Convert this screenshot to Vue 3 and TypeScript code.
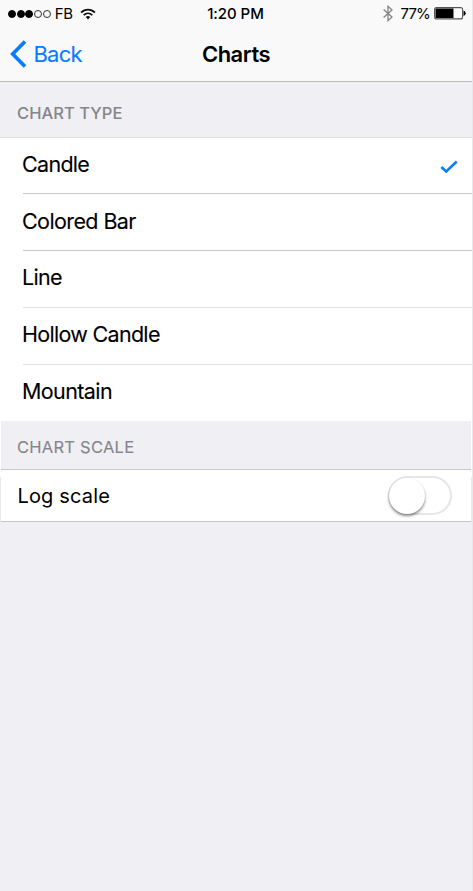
<script setup lang="ts">
import { ref } from 'vue'

interface ChartOption {
  id: string
  label: string
}

const options: ChartOption[] = [
  { id: 'candle', label: 'Candle' },
  { id: 'colored', label: 'Colored Bar' },
  { id: 'line', label: 'Line' },
  { id: 'hollow', label: 'Hollow Candle' },
  { id: 'mountain', label: 'Mountain' },
]
const selected = ref('candle')
const logScale = ref(false)
const signal = [true, true, true, false, false]
</script>

<template>
  <div class="screen">
    <header class="top">
      <div class="status">
        <div class="carrier">
          <span class="dots"><i v-for="(on, n) in signal" :key="n" class="dot" :class="{ on }"></i></span>
          <span class="network">FB</span>
          <svg class="wifi" width="16" height="12" viewBox="0 0 16 12" fill="none" stroke="#111" stroke-width="1.8">
            <path d="M1.1 4.5C5 .6 11 .6 14.9 4.5" />
            <path d="M3.7 7.1C6.2 4.7 9.8 4.7 12.3 7.1" />
            <path d="M5.7 9.1Q8 7 10.3 9.1L8 11.5Z" fill="#111" stroke="none" />
          </svg>
        </div>
        <span class="time">1:20 PM</span>
        <div class="power">
          <svg class="bluetooth" width="10" height="17" viewBox="0 0 10 17" fill="none" stroke="#858585" stroke-width="1.3">
            <path d="M.6 4.6 9 12 5 15.7V1.3L9 5 .6 12.4" />
          </svg>
          <span class="percent">77%</span>
          <svg class="battery" width="32" height="13" viewBox="0 0 32 13">
            <rect x=".6" y=".6" width="28" height="11.3" rx="2" fill="#fff" stroke="#555" stroke-width="1.1" />
            <path d="M1.5 1.5H19.5V11H1.5Z" fill="#000" />
            <path d="M29.5 3.5Q31.7 4.3 31.7 6.2T29.5 9Z" fill="#000" />
          </svg>
        </div>
      </div>
      <nav class="nav">
        <button class="back">
          <svg width="17" height="28" viewBox="0 0 17 28" fill="none" stroke="#087cff" stroke-width="3.7">
            <path d="M15 1.5 2.7 14 15 26.5" />
          </svg>
          <span>Back</span>
        </button>
        <h1>Charts</h1>
      </nav>
    </header>

    <h2 class="heading type">CHART TYPE</h2>
    <ul class="list">
      <li v-for="o in options" :key="o.id" :class="o.id" @click="selected = o.id">
        <span class="label">{{ o.label }}</span>
        <svg v-if="selected === o.id" class="check" width="18" height="14" viewBox="0 0 18 14" fill="none" stroke="#087cff" stroke-width="2.5">
          <path d="M1.3 7 6.2 11.5 16.7 1.5" />
        </svg>
      </li>
    </ul>
    <section class="scale-section">
      <h2 class="heading scale">CHART SCALE</h2>
      <div class="row">
        <span class="row-label">Log scale</span>
        <button class="switch" :class="{ active: logScale }" role="switch" :aria-checked="logScale" @click="logScale = !logScale">
          <i class="knob"></i>
        </button>
      </div>
    </section>
  </div>
</template>

<style>
body { margin: 0; }
</style>

<style scoped>
* { box-sizing: border-box; }
.screen {
  width: 473px;
  height: 891px;
  background: #efeff4;
  border-right: 1px solid #e8e8ec;
  font-family: Inter, Roboto, sans-serif;
  color: #000;
  overflow: hidden;
}
button { border: 0; background: none; padding: 0; font: inherit; }
.top { height: 82px; background: #f9f9f9; border-bottom: 1px solid #bdbdc0; }
.status { height: 27px; display: grid; grid-template-columns: 1fr auto 1fr; align-items: center; font-size: 15px; line-height: 27px; }
.carrier { display: flex; align-items: center; padding-left: 8px; }
.dots { display: flex; gap: .7px; }
.dot { width: 8px; height: 8px; border: 1px solid #333; border-radius: 50%; }
.dot.on { background: #000; border-color: #000; }
.network { margin-left: 4px; letter-spacing: -.3px; }
.wifi { margin-left: 7px; }
.time { font-weight: 500; letter-spacing: -.05px; margin-right: 1px; }
.power { display: flex; align-items: center; justify-content: flex-end; padding-right: 6px; }
.percent { margin: 0 4px 0 8px; letter-spacing: -.85px; }
.bluetooth { margin-right: 0; }
.nav { height: 54px; display: grid; grid-template-columns: 1fr auto 1fr; align-items: center; }
.back { display: flex; align-items: center; gap: 7px; padding-left: 10px; color: #087cff; font-size: 22px; letter-spacing: -.8px; line-height: 54px; }
.back span { margin-left: -.5px; -webkit-text-stroke: .1px; }
h1 { margin: 0; font-size: 22px; font-weight: 600; letter-spacing: -.5px; line-height: 54px; }
.heading { margin: 0; padding-left: 17px; color: #85858b; font-size: 16.5px; font-weight: 500; }
.type { height: 56px; line-height: 63px; border-bottom: 1px solid #dedee1; letter-spacing: .05px; }
.list { list-style: none; margin: 0; padding: 0 0 0 23px; background: #fff; }
.list li { height: 57px; display: flex; justify-content: space-between; padding-right: 14px; border-bottom: 1px solid #c8c8cc; font-size: 21.5px; line-height: 53px; letter-spacing: -.7px; }
.list .candle { height: 56px; }
.list .colored { line-height: 54px; letter-spacing: -.6px; }
.list .line, .list .hollow { border-color: #e1e1e4; }
.list .mountain { height: 56px; border: 0; letter-spacing: -.6px; }
.label { margin-left: -1px; -webkit-text-stroke: .1px; }
.check { margin-top: 22px; }
.scale-section { padding: 0 1px; background: linear-gradient(#fff 0 56px, #e8e8ec 56px); }
.scale { height: 49px; padding-left: 16px; line-height: 52px; font-weight: 400; letter-spacing: .25px; background: #efeff4; border-bottom: 1px solid #c8c8ce; -webkit-text-stroke: .1px; }
.row { height: 52px; display: flex; align-items: center; justify-content: space-between; padding: 0 19px 0 16.5px; background: #fff; border-bottom: 1px solid #c4c4c9; }
.row-label { font-size: 20px; letter-spacing: .15px; }
.switch { width: 64px; height: 39px; border: 2.5px solid #e6e6e6; border-radius: 20px; }
.knob { display: block; width: 36px; height: 36px; margin: -.5px 0 0 -1px; border-radius: 50%; background: #fff; box-shadow: 0 2px 3px #0007; }
.active { background: #4cd964; }
.active .knob { margin-left: 25px; }
</style>
